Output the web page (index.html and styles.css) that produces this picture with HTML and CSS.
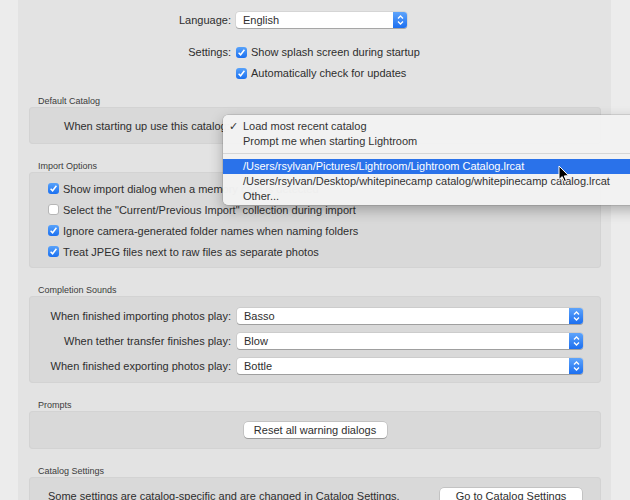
FILE: index.html
```html
<!DOCTYPE html>
<html>
<head>
<meta charset="utf-8">
<link rel="stylesheet" href="styles.css">
</head>
<body>
<div class="window">
  <div class="side"></div>
  <main class="panel">
    <div class="general">
      <span class="label">Language:</span>
      <div class="select lang-select">
        <span class="select-text">English</span>
        <span class="stepper"><svg width="7" height="10" viewBox="0 0 7 10"><path d="M1 3.5 L3.5 1 L6 3.5 M1 6.5 L3.5 9 L6 6.5" fill="none" stroke="#fff" stroke-width="1.3"/></svg></span>
      </div>
      <span class="label settings-label">Settings:</span>
      <label class="check settings-check"><span class="box on"><svg width="9" height="9" viewBox="0 0 9 9"><path d="M1.6 4.8 L3.6 6.8 L7.4 1.8" fill="none" stroke="#fff" stroke-width="1.5"/></svg></span>Show splash screen during startup</label>
      <span class="label"></span>
      <label class="check"><span class="box on"><svg width="9" height="9" viewBox="0 0 9 9"><path d="M1.6 4.8 L3.6 6.8 L7.4 1.8" fill="none" stroke="#fff" stroke-width="1.5"/></svg></span>Automatically check for updates</label>
    </div>

    <section class="group first">
      <h2 class="group-title">Default Catalog</h2>
      <div class="group-box catalog-box">
        <span class="catalog-label">When starting up use this catalog:</span>
      </div>
    </section>

    <section class="group">
      <h2 class="group-title">Import Options</h2>
      <div class="group-box import-box">
        <label class="check row"><span class="box on"><svg width="9" height="9" viewBox="0 0 9 9"><path d="M1.6 4.8 L3.6 6.8 L7.4 1.8" fill="none" stroke="#fff" stroke-width="1.5"/></svg></span>Show import dialog when a memory card is detected</label>
        <label class="check row"><span class="box"></span>Select the "Current/Previous Import" collection during import</label>
        <label class="check row"><span class="box on"><svg width="9" height="9" viewBox="0 0 9 9"><path d="M1.6 4.8 L3.6 6.8 L7.4 1.8" fill="none" stroke="#fff" stroke-width="1.5"/></svg></span>Ignore camera-generated folder names when naming folders</label>
        <label class="check row"><span class="box on"><svg width="9" height="9" viewBox="0 0 9 9"><path d="M1.6 4.8 L3.6 6.8 L7.4 1.8" fill="none" stroke="#fff" stroke-width="1.5"/></svg></span>Treat JPEG files next to raw files as separate photos</label>
      </div>
    </section>

    <section class="group">
      <h2 class="group-title">Completion Sounds</h2>
      <div class="group-box sounds-box">
        <span class="label">When finished importing photos play:</span>
        <div class="select wide"><span class="select-text">Basso</span><span class="stepper"><svg width="7" height="10" viewBox="0 0 7 10"><path d="M1 3.5 L3.5 1 L6 3.5 M1 6.5 L3.5 9 L6 6.5" fill="none" stroke="#fff" stroke-width="1.3"/></svg></span></div>
        <span class="label">When tether transfer finishes play:</span>
        <div class="select wide"><span class="select-text">Blow</span><span class="stepper"><svg width="7" height="10" viewBox="0 0 7 10"><path d="M1 3.5 L3.5 1 L6 3.5 M1 6.5 L3.5 9 L6 6.5" fill="none" stroke="#fff" stroke-width="1.3"/></svg></span></div>
        <span class="label">When finished exporting photos play:</span>
        <div class="select wide"><span class="select-text">Bottle</span><span class="stepper"><svg width="7" height="10" viewBox="0 0 7 10"><path d="M1 3.5 L3.5 1 L6 3.5 M1 6.5 L3.5 9 L6 6.5" fill="none" stroke="#fff" stroke-width="1.3"/></svg></span></div>
      </div>
    </section>

    <section class="group">
      <h2 class="group-title">Prompts</h2>
      <div class="group-box prompts-box">
        <button class="btn reset-btn">Reset all warning dialogs</button>
      </div>
    </section>

    <section class="group">
      <h2 class="group-title">Catalog Settings</h2>
      <div class="group-box settings-box">
        <span class="settings-text">Some settings are catalog-specific and are changed in Catalog Settings.</span>
        <button class="btn goto-btn">Go to Catalog Settings</button>
      </div>
    </section>
  </main>
  <div class="side"></div>

  <div class="menu">
    <div class="menu-item"><span class="tick">✓</span>Load most recent catalog</div>
    <div class="menu-item">Prompt me when starting Lightroom</div>
    <div class="menu-sep"></div>
    <div class="menu-item selected">/Users/rsylvan/Pictures/Lightroom/Lightroom Catalog.lrcat</div>
    <div class="menu-item">/Users/rsylvan/Desktop/whitepinecamp catalog/whitepinecamp catalog.lrcat</div>
    <div class="menu-item">Other...</div>
  </div>

  <svg class="cursor" width="12" height="18" viewBox="0 0 12 18"><path d="M1 1 L1 14.5 L4.2 11.6 L6.4 16.6 L8.4 15.7 L6.3 10.9 L10.6 10.7 Z" fill="#000" stroke="#fff" stroke-width="1"/></svg>
</div>
</body>
</html>
```

FILE: styles.css
```css
* { box-sizing: border-box; }

html, body {
  margin: 0;
  padding: 0;
  width: 630px;
  height: 500px;
  overflow: hidden;
  background: #ececec;
  font-family: "Liberation Sans", Arial, sans-serif;
  font-size: 11px;
  color: #2e2e2e;
}

.window {
  position: relative;
  display: flex;
  width: 630px;
  height: 500px;
}

.side {
  flex: 1;
  background: #ececec;
}
.side:first-child {
  flex: 0 0 18px;
}

.panel {
  flex: 0 0 593px;
  background: #e3e3e3;
  padding-top: 12px;
}

.label {
  text-align: right;
  white-space: nowrap;
}

/* General block */
.general {
  display: grid;
  grid-template-columns: 213px 1fr;
  grid-template-rows: 16px 32px 21px;
  column-gap: 5px;
}
.general > * {
  height: 16px;
  display: flex;
  align-items: center;
}
.general > .label { justify-content: flex-end; }
.general > :nth-child(1),
.general > :nth-child(2) { grid-row: 1; align-self: start; }
.general > :nth-child(3),
.general > :nth-child(4) { grid-row: 2; align-self: end; }
.general > :nth-child(5),
.general > :nth-child(6) { grid-row: 3; align-self: end; }

/* Select */
.select {
  display: flex;
  align-items: stretch;
  height: 16px;
  background: #fff;
  border-radius: 3px;
  box-shadow: 0 0 0 0.5px rgba(0,0,0,0.12), 0 1px 0 rgba(0,0,0,0.22);
  overflow: hidden;
}
.general > .select { align-items: stretch; }
.select-text {
  flex: 1;
  padding-left: 7px;
  line-height: 16px;
  color: #2e2e2e;
}
.stepper {
  flex: 0 0 14px;
  display: flex;
  align-items: center;
  justify-content: center;
  background: linear-gradient(#5ea4fb, #1c6ff0);
}
.lang-select { width: 171px; }

/* Checkboxes */
.check {
  display: flex;
  align-items: center;
  gap: 4px;
  white-space: nowrap;
}
.box {
  width: 11px;
  height: 11px;
  border-radius: 3px;
  background: #fff;
  box-shadow: inset 0 0 0 1px #b6b6b6;
  display: flex;
  align-items: center;
  justify-content: center;
  flex: 0 0 11px;
}
.box.on {
  background: linear-gradient(#58a2fa, #1b70f0);
  box-shadow: none;
}

/* Groups */
.group { margin-top: 16px; }
.group.first { margin-top: 14px; }
.group-title {
  margin: 0 0 0 20px;
  font-size: 9px;
  font-weight: normal;
  line-height: 12px;
  color: #3c3c3c;
}
.group-box {
  margin: 0 10px 0 11px;
  background: #d9d9d9;
  border-radius: 4px;
  box-shadow: inset 0 0 0 1px #d3d3d3;
}

.catalog-box {
  height: 37px;
  display: flex;
  align-items: center;
  padding-left: 35px;
}

.import-box {
  padding: 6px 0 6px 19px;
  display: flex;
  flex-direction: column;
}
.import-box .row { height: 21px; }

.sounds-box {
  display: grid;
  grid-template-columns: 202px 346px;
  column-gap: 6px;
  grid-auto-rows: 25px;
  align-items: center;
  padding: 7px 0 5px 0;
}

.prompts-box {
  height: 38px;
  display: flex;
  align-items: center;
  justify-content: center;
}

.settings-box {
  display: flex;
  align-items: center;
  justify-content: space-between;
  padding: 8px 19px 10px 19px;
  height: 40px;
}

.btn {
  font-family: inherit;
  font-size: 11px;
  color: #2e2e2e;
  background: #fff;
  border: none;
  border-radius: 4px;
  box-shadow: 0 0 0 0.5px rgba(0,0,0,0.2), 0 1px 0 rgba(0,0,0,0.2);
  height: 16px;
  padding: 0;
  line-height: 16px;
}
.reset-btn { width: 143px; }
.goto-btn { width: 142px; }

/* Popup menu */
.menu {
  position: absolute;
  left: 223px;
  top: 115px;
  width: 430px;
  padding: 4px 0 1px;
  background: rgba(242,242,242,0.98);
  border-radius: 5px;
  box-shadow: 0 0 0 0.5px rgba(0,0,0,0.18), 0 5px 14px rgba(0,0,0,0.28);
}
.menu-item {
  position: relative;
  height: 15px;
  line-height: 15px;
  padding-left: 20px;
  color: #333;
  white-space: nowrap;
}
.menu-item .tick {
  position: absolute;
  left: 6px;
  top: 0;
}
.menu-sep {
  height: 1px;
  background: #d6d6d6;
  margin: 4px 0 5px;
}
.menu-item.selected {
  background: #2a72ea;
  color: #fff;
}

.cursor {
  position: absolute;
  left: 558px;
  top: 165px;
}
```
